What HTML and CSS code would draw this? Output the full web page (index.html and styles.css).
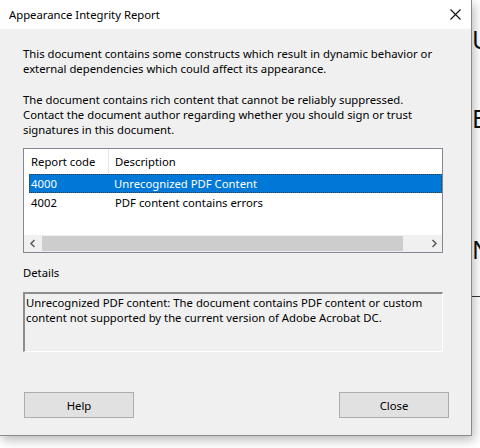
FILE: index.html
```html
<!DOCTYPE html>
<html>
<head>
<meta charset="utf-8">
<link rel="stylesheet" href="styles.css">
</head>
<body>
<div class="page">
  <div class="dialog">
    <div class="titlebar">
      <span class="title">Appearance Integrity Report</span>
      <svg class="xbtn" width="11" height="11" viewBox="0 0 11 11"><path d="M0.5 0.5L10.5 10.5M10.5 0.5L0.5 10.5" stroke="#111" stroke-width="1.1" fill="none"/></svg>
    </div>
    <div class="content">
      <p class="para p1">This document contains some constructs which result in dynamic behavior or<br>external dependencies which could affect its appearance.</p>
      <p class="para p2">The document contains rich content that cannot be reliably suppressed.<br>Contact the document author regarding whether you should sign or trust<br>signatures in this document.</p>
      <div class="list">
        <div class="lhead">
          <div class="hc1">Report code</div>
          <div class="hsep"></div>
          <div class="hc2">Description</div>
        </div>
        <div class="rows">
          <div class="row sel"><div class="c1">4000</div><div class="c2">Unrecognized PDF Content</div></div>
          <div class="row"><div class="c1">4002</div><div class="c2">PDF content contains errors</div></div>
        </div>
        <div class="hscroll">
          <div class="arrow"><svg width="8" height="9" viewBox="0 0 8 9"><path d="M5.5 1L2 4.5L5.5 8" stroke="#606060" stroke-width="1.6" fill="none"/></svg></div>
          <div class="track"><div class="thumb"></div></div>
          <div class="arrow"><svg width="8" height="9" viewBox="0 0 8 9"><path d="M2.5 1L6 4.5L2.5 8" stroke="#606060" stroke-width="1.6" fill="none"/></svg></div>
        </div>
      </div>
      <div class="dlabel">Details</div>
      <div class="details">Unrecognized PDF content: The document contains PDF content or custom<br>content not supported by the current version of Adobe Acrobat DC.</div>
      <div class="buttons">
        <button class="btn">Help</button>
        <button class="btn">Close</button>
      </div>
    </div>
  </div>
  <div class="strip">
    <span class="bg-letter l1">U</span>
    <span class="bg-letter l2">E</span>
    <span class="bg-letter l3">N</span>
    <div class="bg-line"></div>
  </div>
</div>
</body>
</html>
```
FILE: styles.css
```css
html, body {
  margin: 0;
  padding: 0;
  background: #ffffff;
  width: 480px;
  height: 448px;
  overflow: hidden;
}
body {
  font-family: "Noto Sans", "Liberation Sans", sans-serif;
  font-size: 11.3px;
  color: #000;
}
.page {
  display: flex;
  align-items: flex-start;
  width: 480px;
}
.dialog {
  flex: 0 0 471px;
  width: 471px;
  height: 435px;
  background: #f0f0f0;
  border-right: 1px solid #8a8a8a;
  border-bottom: 1px solid #8a8a8a;
  box-shadow: 2px 4px 10px rgba(0,0,0,0.28);
  display: flex;
  flex-direction: column;
  position: relative;
  z-index: 1;
}
.titlebar {
  height: 29px;
  background: #ffffff;
  display: flex;
  align-items: center;
  justify-content: space-between;
  padding: 0 10px 0 9px;
}
.title {
  line-height: 29px;
}
.xbtn {
  display: block;
}
.content {
  padding: 16px 28px 0 23px;
  display: flex;
  flex-direction: column;
}
.para {
  margin: 0;
  line-height: 15px;
  white-space: nowrap;
}
.p1 { margin-top: 0.5px; }
.p2 { margin-top: 16px; }
.list {
  margin-top: 11.5px;
  width: 418px;
  height: 103px;
  border: 1px solid #828790;
  background: #ffffff;
  display: flex;
  flex-direction: column;
}
.lhead {
  height: 25px;
  display: flex;
  align-items: center;
}
.hc1 {
  width: 77px;
  padding-left: 7px;
}
.hsep {
  width: 1px;
  height: 25px;
  background: #e5e5e5;
}
.hc2 {
  padding-left: 6px;
}
.rows {
  margin-left: 5px;
  flex: 1;
}
.row {
  height: 19px;
  display: flex;
  align-items: center;
  box-sizing: border-box;
}
.row.sel {
  background: #0078d7;
  color: #ffffff;
  border: 1px dotted #3a3a3a;
}
.c1 {
  width: 84px;
  padding-left: 2px;
}
.row.sel .c1 { width: 83px; padding-left: 1px; }
.hscroll {
  height: 17px;
  display: flex;
  background: #f0f0f0;
}
.arrow {
  width: 17px;
  display: flex;
  align-items: center;
  justify-content: center;
}
.track {
  flex: 1;
  display: flex;
  align-items: center;
}
.thumb {
  margin-left: 1px;
  width: 361px;
  height: 15px;
  background: #cdcdcd;
}
.dlabel {
  margin-top: 11.5px;
  line-height: 15px;
}
.details {
  margin-top: 12.5px;
  width: 416px;
  height: 56px;
  box-sizing: content-box;
  border-top: 2px solid #8c8c8c;
  border-left: 2px solid #8c8c8c;
  border-bottom: 1px solid #ffffff;
  border-right: 1px solid #ffffff;
  padding: 1px 0 0 1px;
  line-height: 15px;
  white-space: nowrap;
  background: #f0f0f0;
}
.buttons {
  margin-top: 40px;
  margin-left: 1px;
  width: 425px;
  display: flex;
  justify-content: space-between;
}
.btn {
  width: 110px;
  height: 26px;
  background: #e1e1e1;
  border: 1px solid #adadad;
  font-family: inherit;
  font-size: 11.3px;
  color: #000;
  padding: 0;
  margin: 0;
}
.strip {
  flex: 1;
  display: flex;
  flex-direction: column;
  font-family: "Noto Sans", "Liberation Sans", sans-serif;
  font-size: 25px;
  color: #111;
  line-height: 25px;
}
.bg-letter { display: block; }
.l1 { margin-top: 27px; }
.l2 { margin-top: 54px; }
.l3 { margin-top: 106px; }
.bg-line {
  margin-top: 34px;
  height: 1px;
  background: #333;
}
```
